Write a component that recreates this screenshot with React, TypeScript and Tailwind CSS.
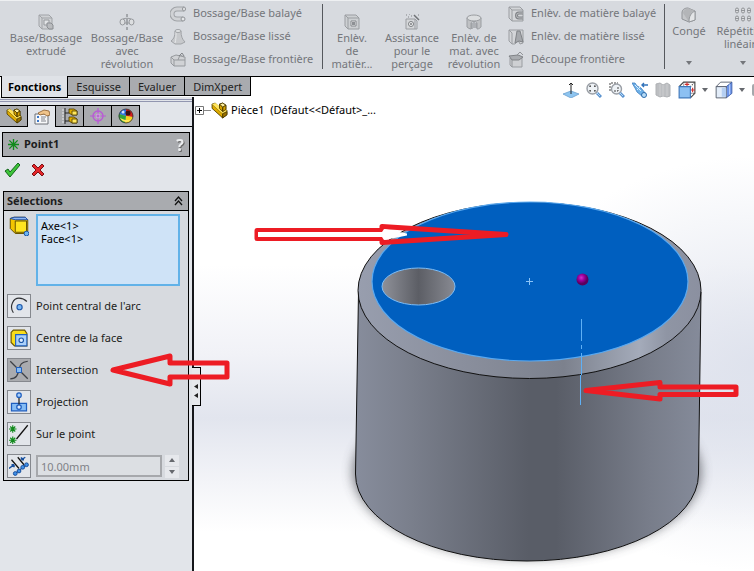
import React, { useState } from 'react';
import { clsx } from 'clsx';

type IconProps = { children: React.ReactNode; className?: string };

const Icon = ({ children, className }: IconProps) => (
  <svg viewBox="0 0 16 16" className={clsx('shrink-0', className ?? 'h-4 w-4')} fill="none" aria-hidden="true">
    {children}
  </svg>
);

// Ribbon icons (disabled, so all grey)
const ExtrudeIcon = () => (
  <Icon>
    <path d="M1 1h10l3 3v11H4L1 12z" fill="#cfd1d4" stroke="#a0a3a7" />
    <path d="M1 1l3 3h10M4 4v11" stroke="#a0a3a7" />
    <path d="M6 6h5v5H6z" fill="#e2e4e6" stroke="#96999d" />
    <path d="M9 9h4l2 2v4h-4l-2-2z" fill="#b9bbbe" stroke="#8a8d91" />
  </Icon>
);

const RevolveIcon = () => (
  <Icon>
    <path d="M8 0v3M8 5v6M8 13v3" stroke="#6f7276" />
    <path d="M4 5c3-1 5-1 8 0M5 9h6" stroke="#96999d" />
    <ellipse cx="3.5" cy="8" rx="2.5" ry="3" fill="#dcdee0" stroke="#96999d" />
    <ellipse cx="12.5" cy="8" rx="2.5" ry="3" fill="#dcdee0" stroke="#96999d" />
  </Icon>
);

const SweepIcon = () => (
  <Icon>
    <path d="M14 3H7a5 5 0 0 0 0 10h6" stroke="#a0a3a7" strokeWidth="5" />
    <path d="M14 3H7a5 5 0 0 0 0 10h6" stroke="#d0d2d5" strokeWidth="3" />
    <ellipse cx="13" cy="13" rx="2" ry="2" fill="#e4e6e8" stroke="#909397" />
    <ellipse cx="14" cy="3" rx="1.5" ry="2" fill="#e4e6e8" stroke="#909397" />
  </Icon>
);

const LoftIcon = () => (
  <Icon>
    <path d="M5 2h6c0 5 1 8 4 11l-4 2H5l-4-3c3-2 4-5 4-10z" fill="#c7c9cc" stroke="#a0a3a7" />
    <path d="M6 3c0 5 0 8-1 11" stroke="#e6e8ea" />
    <ellipse cx="8" cy="2" rx="3" ry="1.5" fill="#e1e3e5" stroke="#a0a3a7" />
  </Icon>
);

const BoundaryIcon = () => (
  <Icon>
    <path d="M1 5l5-2 9 2v9H4l-3-3z" fill="#d0d2d5" stroke="#96999d" />
    <path d="M1 5l3 3h11M4 8v6M8 8l2-5 4 2" stroke="#96999d" />
    <path d="M9 4l3-3 2 3" stroke="#808387" />
  </Icon>
);

const CutExtrudeIcon = () => (
  <Icon>
    <path d="M1 1h11l3 3v11H4l-3-3z" fill="#cccfd2" stroke="#9a9da1" />
    <path d="M1 1l3 3h11M4 4v11" stroke="#9a9da1" />
    <path d="M7 7h5v5H7z" fill="#f0f1f2" stroke="#85888c" />
    <path d="M8 8h3v3H8z" fill="#8d9094" />
  </Icon>
);

const HoleWizardIcon = () => (
  <Icon>
    <path d="M2 5h9v10H2z" fill="#d4d6d9" stroke="#9a9da1" />
    <path d="M11 5l2 2v8h-2" stroke="#9a9da1" />
    <circle cx="7" cy="10" r="2.5" fill="#eeeff0" stroke="#7b7e82" />
    <circle cx="7" cy="10" r="1" fill="#7b7e82" />
    <path d="M10 1l5 5" stroke="#6f7276" strokeWidth="1.5" />
    <path d="M2 1h1M5 0h1M7 2h1M4 3h1M14 1h1" stroke="#808387" />
  </Icon>
);

const CutRevolveIcon = () => (
  <Icon>
    <path d="M1 4v9c1 1 3 2 4 2V9c1-2 5-2 6 0v6c2 0 3-1 4-2V4z" fill="#bfc1c4" stroke="#9a9da1" />
    <ellipse cx="8" cy="4" rx="7" ry="3" fill="#dcdee0" stroke="#9a9da1" />
    <path d="M6 9v6M8 8v6M10 9v5" stroke="#85888c" />
  </Icon>
);

const CutSweepIcon = () => (
  <Icon>
    <path d="M1 1h11l3 3v11H4l-3-3z" fill="#d3d5d8" stroke="#9a9da1" />
    <path d="M1 1l3 3h11M4 4v11" stroke="#9a9da1" />
    <path d="M15 7h-4a2 2 0 0 0 0 5h4" stroke="#808387" strokeWidth="3" />
    <path d="M15 7h-4a2 2 0 0 0 0 5h4" stroke="#b9bbbe" />
  </Icon>
);

const CutLoftIcon = () => (
  <Icon>
    <path d="M1 1h14v13l-3 1-2-4-3 4H4l-3-3z" fill="#d3d5d8" stroke="#9a9da1" />
    <path d="M1 1l3 3v11" stroke="#9a9da1" />
    <path d="M9 2h3l3 11-4-1-4 2z" fill="#a5a8ac" stroke="#808387" />
  </Icon>
);

const CutBoundaryIcon = () => (
  <Icon>
    <path d="M2 6h12v9H4l-2-2z" fill="#ced0d3" stroke="#9a9da1" />
    <path d="M1 4l9-1 5 2-4 3H4z" fill="#a9acb0" stroke="#808387" />
    <path d="M4 8v7M9 3l3-3 3 3" stroke="#909397" />
  </Icon>
);

const FilletIcon = () => (
  <Icon>
    <path d="M1 6c0-3 2-5 6-5l7 3v9l-6 2-7-3z" fill="#c4c6c9" stroke="#909397" />
    <path d="M2 6c0-2 2-4 5-5l7 3C10 5 8 8 8 15z" fill="#b3b5b8" />
    <path d="M8 15c0-6 2-9 6-11v9z" fill="#e3e5e7" stroke="#96999d" />
  </Icon>
);

const PatternIcon = () => (
  <svg viewBox="0 0 18 16" className="h-4 w-[18px] shrink-0" aria-hidden="true">
    {[3, 9, 15].map((x) => (
      <g key={x} stroke="#909397" fill="#d8dadc">
        <rect x={x - 1.5} y="1" width="3" height="5" rx="1.5" />
        <rect x={x - 1.5} y="9" width="3" height="5" rx="1.5" />
        <path d={`M${x - 1.5} 3.5h3M${x - 1.5} 11.5h3`} />
      </g>
    ))}
  </svg>
);

// Panel icons
const PartIcon = ({ className }: { className?: string }) => (
  <Icon className={className ?? 'h-4 w-4'}>
    <path d="M1 2l3-1 4 4 0-3 3-1 3 2v4l1 1v4l-4 3z" fill="#f5c518" stroke="#4a3a00" strokeWidth="0.8" />
    <path d="M1 2l10 9v4L1 6z" fill="#e0ac00" stroke="#4a3a00" strokeWidth="0.8" />
    <path d="M1 2l3-1 11 8-4 2z" fill="#ffe45c" />
    <path d="M8 2l3-1 3 2-3 2z" fill="#fff0a0" stroke="#4a3a00" strokeWidth="0.8" />
    <path d="M8 2l3 3v4L8 6zM11 5l3-2v4l-3 2z" fill="#d9a400" stroke="#4a3a00" strokeWidth="0.8" />
    <path d="M11 11l4-2v3l-4 3z" fill="#9a7200" stroke="#4a3a00" strokeWidth="0.8" />
  </Icon>
);

const PropertyIcon = () => (
  <Icon>
    <path d="M1 5h13v10H1z" fill="#f7f8fa" stroke="#6d7077" />
    <path d="M3 8h2M3 12h2" stroke="#3c78c8" strokeWidth="2" />
    <path d="M7 8h5M7 10h4M7 12h5" stroke="#80838a" />
    <path d="M4 4l6-3 5 1 1 4-3 1-3-2-4 1z" fill="#f0c48a" stroke="#8a5a2a" strokeWidth="0.8" />
  </Icon>
);

const ConfigIcon = () => (
  <Icon>
    <path d="M3 0v16M3 5h4M3 13h4" stroke="#222" />
    <path d="M1 1v14" stroke="#e8e9eb" strokeDasharray="2 1" />
    {[1, 9].map((y) => (
      <g key={y} stroke="#4a3a00" strokeWidth="0.8">
        <path d={`M7 ${y}h5l3 2v4h-5l-3-2z`} fill="#e0ac00" />
        <path d={`M10 ${y + 2}h5v4h-5z`} fill="#ffe65a" />
      </g>
    ))}
  </Icon>
);

const TargetIcon = () => (
  <Icon>
    <circle cx="8" cy="8" r="5" stroke="#b95bd6" strokeWidth="1.4" />
    <path d="M8 0v16M0 8h16" stroke="#b95bd6" strokeWidth="1.2" />
    <circle cx="8" cy="8" r="2" stroke="#d79be8" />
  </Icon>
);

const AppearanceIcon = () => (
  <Icon>
    <path d="M8 8L1 6a7 7 0 0 1 8-5z" fill="#2f74e0" />
    <path d="M8 8V1a7 7 0 0 1 7 8z" fill="#d81e1e" />
    <path d="M8 8l7 1a7 7 0 0 1-8 6z" fill="#f6d21c" />
    <path d="M8 8l-1 7a7 7 0 0 1-6-9z" fill="#33a53a" />
    <path d="M2 10a7 7 0 0 0 12 1c-4 2-8 1-12-1z" fill="#ffe75a" />
    <circle cx="10" cy="5" r="2.5" fill="#3a1212" />
    <circle cx="5" cy="4" r="1.5" fill="#cfe2ff" />
    <circle cx="8" cy="8" r="7" stroke="#333" strokeWidth="0.8" />
  </Icon>
);

const PointIcon = () => (
  <Icon className="h-[11px] w-[11px]">
    <path d="M8 0v16M0 8h16M2 2l12 12M14 2L2 14" stroke="#118a1c" strokeWidth="2" />
  </Icon>
);

const SelectionIcon = () => (
  <Icon className="h-[20px] w-[20px]">
    <path d="M1 2l3-1h9l2 2v9l-2 2H5l-4-4z" fill="#f3c500" stroke="#6b5600" strokeWidth="0.8" />
    <path d="M1 2l3-1h9l2 2H5z" fill="#8db8f5" stroke="#2351a8" strokeWidth="0.8" />
    <path d="M5 4h9v9H5z" fill="#ffe51f" stroke="#6b5600" strokeWidth="0.8" />
    <circle cx="14" cy="14" r="1.9" fill="#6db4f2" stroke="#1c56a8" strokeWidth="0.8" />
  </Icon>
);

const ArcIcon = () => (
  <Icon className="h-[18px] w-[18px]">
    <path d="M3 14C-1 8 3 1 8 1c3 0 5 1 7 3" stroke="#2d2f33" />
    <circle cx="8.500" cy="9" r="2.300" fill="#7ab8f5" stroke="#1c56a8" />
  </Icon>
);

const FaceCenterIcon = () => (
  <Icon className="h-[18px] w-[18px]">
    <path d="M1 3l2-2h10l2 3v11H4l-3-3z" fill="#f9dc1c" stroke="#6b5600" />
    <path d="M5 5h10v10H5z" fill="#a9d0fb" stroke="#1f5fc0" />
    <circle cx="10" cy="10" r="2" fill="#dcecff" stroke="#1c56a8" />
  </Icon>
);

const IntersectionIcon = () => (
  <Icon className="h-[20px] w-[20px]">
    <path d="M1 1l14 14M1 15c5 0 6-3 7-7s1-6 7-7" stroke="#3d4046" />
    <path d="M6 6h4v4H6z" fill="#86bdf5" stroke="#1f5fc0" strokeWidth="0.8" />
  </Icon>
);

const ProjectionIcon = () => (
  <Icon className="h-[20px] w-[20px]">
    <path d="M2 9h12v6H2z" fill="#86bdf5" stroke="#1f5fc0" />
    <path d="M8 4v7" stroke="#222" />
    <circle cx="8" cy="2.500" r="1.800" fill="#a9d0fb" stroke="#1f5fc0" />
    <circle cx="8" cy="12" r="1.800" fill="#dcecff" stroke="#1f5fc0" />
  </Icon>
);

const OnPointIcon = () => (
  <Icon className="h-[20px] w-[20px]">
    <path d="M6 12l9-11" stroke="#111" />
    <path d="M3 1v6M0 4h6M1 2l4 4M5 2L1 6M3 10v6M0 13h6M1 11l4 4M5 11l-4 4" stroke="#118a1c" strokeWidth="0.9" />
  </Icon>
);

const DistanceIcon = () => (
  <Icon className="h-[20px] w-[20px]">
    <path d="M5 14L15 6" stroke="#174f9e" strokeWidth="1.2" />
    <path d="M2 3l6 7M7 1l5 6" stroke="#111" />
    <path d="M0 10l4-3M4 7v2M4 7H2M13 1l-3 2M10 3V1M10 3h2" stroke="#174f9e" strokeWidth="1.2" />
    {[[5, 14], [8, 12], [11, 9], [14, 7]].map(([x, y]) => (
      <circle key={x} cx={x} cy={y} r="1.5" fill="#3f90e8" stroke="#174f9e" strokeWidth="0.8" />
    ))}
  </Icon>
);

// View toolbar icons
const NormalToIcon = () => (
  <Icon>
    <path d="M0 12l8-3 8 3-8 4z" fill="#8ec5f0" stroke="#6aa0cf" strokeWidth="0.8" />
    <path d="M8 12V1M6 3l2-2 2 2" stroke="#222" />
  </Icon>
);

const ZoomFitIcon = () => (
  <Icon>
    <circle cx="6.5" cy="6.5" r="5.500" fill="#eef2f6" stroke="#9a9fa6" strokeWidth="1.4" />
    <path d="M4 5V4h1M8 4h1v1M9 8v1H8M5 9H4V8" stroke="#333" strokeWidth="1.2" />
    <path d="M11 11l4 4" stroke="#5b93cf" strokeWidth="3" />
    <path d="M11 11l3 3" stroke="#b5daf8" />
  </Icon>
);

const ZoomAreaIcon = () => (
  <Icon>
    <path d="M1 9V1h8" stroke="#444" strokeDasharray="2 1" />
    <circle cx="7.500" cy="7" r="5" fill="#eef2f6" stroke="#9a9fa6" strokeWidth="1.4" />
    <path d="M5 9h4V4" stroke="#444" strokeDasharray="2 1" />
    <path d="M11 11l4 4" stroke="#5b93cf" strokeWidth="3" />
    <path d="M11 11l3 3" stroke="#b5daf8" />
  </Icon>
);

const PreviousViewIcon = () => (
  <Icon>
    <path d="M0 1l3 0 2 3 4 2 5 6-3 3-6-5-2-4z" fill="#6fb1e8" stroke="#3f7fc0" strokeWidth="0.8" />
    <ellipse cx="12" cy="13" rx="2.500" ry="2.500" fill="#b7dcf8" stroke="#2d6cab" />
    <path d="M3 3l6 6M5 8l3-3" stroke="#d9eefc" />
    <path d="M10 3h6M12 1l-2 2 2 2" stroke="#3273ba" strokeWidth="1.4" />
  </Icon>
);

const SectionViewIcon = () => (
  <Icon>
    <path d="M1 2l4-1 3 2 4-2 3 2v11l-3 1-4-1-3 1-4-2z" fill="#bcbec1" stroke="#b0b2b5" />
    <path d="M5 2v12M8 3v11M12 2v12" stroke="#cdced0" />
  </Icon>
);

const OrientationIcon = () => (
  <Icon className="h-[18px] w-[18px]">
    <path d="M1 5l4-4h10v10l-4 4" fill="#fff" stroke="#444" />
    <path d="M5 1v4M11 5l4-4M11 11h4" stroke="#555" strokeDasharray="1 1" />
    <path d="M8 1v4M6 3h4M13 6v4M11 8h4" stroke="#d03030" />
    <path d="M1 5h10v10H1z" fill="#8cc0f2" stroke="#3f78bb" />
  </Icon>
);

const DisplayStyleIcon = () => (
  <Icon className="h-[18px] w-[18px]">
    <path d="M1 5l4-4h10l-4 4z" fill="#fff" stroke="#555c6b" strokeWidth="0.8" />
    <path d="M10 5l5-4v10l-5 4z" fill="#6b93e8" stroke="#4060a8" strokeWidth="0.8" />
    <path d="M13 3v9" stroke="#b9cffa" />
    <path d="M1 5h9v10H1z" fill="#e3edf9" stroke="#555c6b" strokeWidth="0.8" />
    <path d="M6 6h4v8H6z" fill="#b5cff2" />
  </Icon>
);

const Caret = ({ className }: { className?: string }) => (
  <svg viewBox="0 0 6 4" className={clsx('h-1 w-1.5 shrink-0', className)} aria-hidden="true">
    <path d="M0 0h6L3 4z" fill="currentColor" />
  </svg>
);

type ToolProps = { icon: React.ReactNode; lines: string[]; className: string; menu?: boolean };

const LargeTool = ({ icon, lines, className, menu }: ToolProps) => (
  <button
    type="button"
    className={clsx('flex h-full shrink-0 flex-col items-center text-center leading-[13px]', className, menu ? 'pt-[7px]' : 'pt-[14px]')}
  >
    {icon}
    <span className="pt-px">
      {lines.map((line) => (
        <span key={line} className="block whitespace-nowrap">{line}</span>
      ))}
    </span>
    {menu && <Caret className="mt-auto mb-[11px]" />}
  </button>
);

const SmallTool = ({ icon, label }: { icon: React.ReactNode; label: string }) => (
  <button type="button" className="flex h-[23px] items-center gap-[7px] whitespace-nowrap">
    {icon}
    {label}
  </button>
);

const Separator = () => <div className="mt-1 h-[65px] w-px shrink-0 bg-[#55585d]" />;

const Ribbon = () => (
  <header className="flex h-[77px] shrink-0 overflow-hidden border-b border-black bg-[#d7dadf] text-[11px] text-[#74767b] shadow-[inset_0_1px_0_#eef0f2]">
    <LargeTool icon={<ExtrudeIcon />} lines={['Base/Bossage', 'extrudé']} className="ml-1 w-[84px]" />
    <LargeTool icon={<RevolveIcon />} lines={['Bossage/Base', 'avec', 'révolution']} className="w-[78px]" />
    <div className="flex w-[156px] shrink-0 flex-col pt-0.5 pl-1">
      <SmallTool icon={<SweepIcon />} label="Bossage/Base balayé" />
      <SmallTool icon={<LoftIcon />} label="Bossage/Base lissé" />
      <SmallTool icon={<BoundaryIcon />} label="Bossage/Base frontière" />
    </div>
    <Separator />
    <LargeTool icon={<CutExtrudeIcon />} lines={['Enlèv.', 'de', 'matièr...']} className="w-[58px]" />
    <LargeTool icon={<HoleWizardIcon />} lines={['Assistance', 'pour le', 'perçage']} className="w-[62px]" />
    <LargeTool icon={<CutRevolveIcon />} lines={['Enlèv. de', 'mat. avec', 'révolution']} className="w-[62px]" />
    <div className="flex w-[159px] shrink-0 flex-col pt-0.5 pl-[3px]">
      <SmallTool icon={<CutSweepIcon />} label="Enlèv. de matière balayé" />
      <SmallTool icon={<CutLoftIcon />} label="Enlèv. de matière lissé" />
      <SmallTool icon={<CutBoundaryIcon />} label="Découpe frontière" />
    </div>
    <Separator />
    <LargeTool icon={<FilletIcon />} lines={['Congé']} className="w-[48px]" menu />
    <LargeTool icon={<PatternIcon />} lines={['Répétition', 'linéaire']} className="w-[60px]" menu />
  </header>
);

const TABS = ['Fonctions', 'Esquisse', 'Evaluer', 'DimXpert'];

const CommandTabs = () => {
  const [current, setCurrent] = useState('Fonctions');

  return (
    <nav className="relative z-10 -mt-px flex h-[21px] w-max pl-px text-[11px] text-[#222]">
      {TABS.map((tab) => (
        <button
          key={tab}
          type="button"
          onClick={() => setCurrent(tab)}
          className={clsx(
            'border-r border-b border-black leading-[17px]',
            tab === current ? 'h-[22px] border-l bg-[#dfe2e7] px-1.5 font-bold text-black' : 'h-5 border-t bg-[#a9abaf] px-2',
          )}
        >
          {tab}
        </button>
      ))}
    </nav>
  );
};

const MANAGERS = [
  { name: 'Arbre de création', icon: <PartIcon /> },
  { name: 'Propriétés', icon: <PropertyIcon /> },
  { name: 'Configurations', icon: <ConfigIcon /> },
  { name: 'DimXpert', icon: <TargetIcon /> },
  { name: 'Apparences', icon: <AppearanceIcon /> },
];

const OPTIONS = [
  { label: "Point central de l'arc", icon: <ArcIcon /> },
  { label: 'Centre de la face', icon: <FaceCenterIcon /> },
  { label: 'Intersection', icon: <IntersectionIcon /> },
  { label: 'Projection', icon: <ProjectionIcon /> },
  { label: 'Sur le point', icon: <OnPointIcon /> },
];

const PropertyPanel = () => {
  const [mode, setMode] = useState('Intersection');

  return (
    <aside className="relative flex flex-1 flex-col border-r-2 border-[#15161a] bg-[#e2e5ea] text-[11px] text-[#1c1d20]">
      <div className="mt-0.5 h-[3px] border-y border-[#9296b0]" />
      <div className="mt-[3px] flex h-[22px] shrink-0 border-b border-black">
        {MANAGERS.map((manager, i) => (
          <button
            key={manager.name}
            type="button"
            aria-label={manager.name}
            className={clsx(
              'flex w-7 items-center justify-center border-t border-r border-black',
              i === 1 ? 'h-[22px] bg-[#e2e5ea]' : 'h-[21px] bg-[#a9abaf]',
            )}
          >
            {manager.icon}
          </button>
        ))}
      </div>

      <h1 className="mx-0.5 mt-[5px] flex h-[25px] shrink-0 items-center gap-[5px] border border-black bg-[#a9abaf] px-[5px] font-bold">
        <PointIcon />
        Point1
        <button type="button" aria-label="Aide" className="ml-auto text-[16px] text-[#eceef0] drop-shadow-[1px_1px_0_#666]">?</button>
      </h1>

      <div className="flex gap-2.5 px-1 py-[5px]">
        <button type="button" aria-label="OK">
          <Icon>
            <path d="M1 9l3-2 2 3 8-9 2 2-10 12z" fill="#3ec43a" stroke="#12651a" />
          </Icon>
        </button>
        <button type="button" aria-label="Annuler">
          <Icon>
            <path d="M2 4l2-2 4 4 4-4 2 2-4 4 4 4-2 2-4-4-4 4-2-2 4-4z" fill="#e3262a" stroke="#7d1013" />
          </Icon>
        </button>
      </div>

      <fieldset className="mx-[3px] mt-2 border border-black bg-[#d7dadf]">
        <div className="flex h-[19px] items-center justify-between border-b border-black bg-[#a9abaf] px-[3px] font-bold">
          Sélections
          <button type="button" aria-label="Réduire">
            <svg viewBox="0 0 9 10" className="mr-0.5 h-2.5 w-[9px]" fill="none" stroke="#111" strokeWidth="1.3">
              <path d="M1 5l3.500-4L8 5M1 9l3.500-4L8 9" />
            </svg>
          </button>
        </div>

        <div className="flex gap-[7px] pt-[3px] pr-2 pl-[3px]">
          <div className="flex w-[22px] justify-end pt-0.5">
            <SelectionIcon />
          </div>
          <ul className="h-[72px] flex-1 border-2 border-[#62b2e8] bg-[#cfe3f7] pt-[3px] pl-[3px] leading-[13px] text-black">
            <li>Axe&lt;1&gt;</li>
            <li>Face&lt;1&gt;</li>
          </ul>
        </div>

        <div className="flex flex-col gap-2 pt-2 pr-[9px] pb-0.5 pl-[3px]">
          {OPTIONS.map((option) => (
            <button
              key={option.label}
              type="button"
              aria-pressed={mode === option.label}
              onClick={() => setMode(option.label)}
              className="flex h-6 items-center gap-[5px] text-left"
            >
              <span
                className={clsx(
                  'flex h-6 w-6 items-center justify-center border border-[#85888e]',
                  mode === option.label ? 'bg-[#a9abaf]' : 'bg-[#e2e5ea]',
                )}
              >
                {option.icon}
              </span>
              {option.label}
            </button>
          ))}
          <div className="flex h-6 items-center gap-[5px]">
            <button type="button" aria-label="Distance" className="flex h-6 w-6 items-center justify-center border border-[#85888e] bg-[#e2e5ea]">
              <DistanceIcon />
            </button>
            <input
              aria-label="Distance"
              defaultValue="10.00mm"
              className="h-[22px] w-0 flex-1 border-2 border-[#a6a8ac] bg-[#dcdfe3] pl-[3px] text-[#808287] outline-none"
            />
            <div className="-ml-0.5 flex w-[14px] flex-col gap-px text-[#66696e]">
              <button type="button" aria-label="Augmenter" className="flex h-[11px] items-center justify-center bg-[#e6e8ec]">
                <Caret className="rotate-180" />
              </button>
              <button type="button" aria-label="Diminuer" className="flex h-[11px] items-center justify-center bg-[#e6e8ec]">
                <Caret />
              </button>
            </div>
          </div>
        </div>
      </fieldset>

      <button
        type="button"
        aria-label="Masquer le panneau"
        className="absolute top-[270px] -right-[9px] z-10 flex h-[39px] w-[9px] items-center justify-center border border-l-0 border-black bg-[#e6e8ec] pt-2"
      >
        <svg viewBox="0 0 4 14" className="h-[14px] w-1">
          <path d="M4 0v5L0 2.500zM4 9v5l-4-2.500z" fill="#222" />
        </svg>
      </button>
    </aside>
  );
};

const Scene = () => (
  <svg viewBox="194 77 560 494" className="absolute inset-0 h-full w-full" fill="none" role="img" aria-label="Pièce1">
    <defs>
      <linearGradient id="side">
        <stop offset="0" stopColor="#878d9c" />
        <stop offset="0.15" stopColor="#7b808d" />
        <stop offset="0.5" stopColor="#595d67" />
        <stop offset="0.58" stopColor="#595d67" />
        <stop offset="0.85" stopColor="#787d8a" />
        <stop offset="1" stopColor="#858b9a" />
      </linearGradient>
      <linearGradient id="chamfer">
        <stop offset="0" stopColor="#989eae" />
        <stop offset="0.3" stopColor="#8a8f9d" />
        <stop offset="0.6" stopColor="#7c818d" />
        <stop offset="0.82" stopColor="#a4abba" />
        <stop offset="0.9" stopColor="#8f95a4" />
        <stop offset="1" stopColor="#8b90a0" />
      </linearGradient>
      <linearGradient id="hole">
        <stop offset="0" stopColor="#8f9199" />
        <stop offset="0.5" stopColor="#5c5e65" />
        <stop offset="1" stopColor="#888a92" />
      </linearGradient>
      <radialGradient id="ball" cx="0.4" cy="0.35">
        <stop offset="0" stopColor="#cc30cc" />
        <stop offset="0.5" stopColor="#9c009c" />
        <stop offset="1" stopColor="#5c005c" />
      </radialGradient>
      <filter id="soft" x="-20%" y="-20%" width="140%" height="140%">
        <feGaussianBlur stdDeviation="6" />
      </filter>
    </defs>

    <ellipse cx="527" cy="472" rx="174" ry="86" fill="#4c4e54" opacity="0.75" filter="url(#soft)" />
    <path d="M358.500 292L355.500 474A171.500 87 0 0 0 698.500 474L701 292z" fill="url(#side)" stroke="#111" />
    <ellipse cx="529.500" cy="290.500" rx="171.500" ry="88" fill="url(#chamfer)" stroke="#111" />
    <ellipse cx="530" cy="281.500" rx="158" ry="79.500" fill="#005fbf" stroke="#5aa9f0" strokeWidth="1.200" />
    <ellipse cx="418.500" cy="286.500" rx="36.500" ry="18.500" fill="url(#hole)" stroke="#7fbdf5" />
    <path d="M526 281.500h7M529.500 278v7" stroke="#8ac4f8" />
    <circle cx="582.500" cy="279.500" r="6" fill="url(#ball)" />
    <path d="M581.500 319v22M581.500 345v4M581.500 353v22M580.500 375v30" stroke="#5fb0f5" />

    <g stroke="#ed1c24" strokeWidth="5" strokeLinejoin="round">
      <path d="M257 230.500h125v-4l124 8-124 8v-4H257z" />
      <path d="M384 229l23 4.500v2L384 240l-2-3H258v-5h124z" fill="#fff" stroke="none" />
      <path d="M586 390.500l74-8v4.500h76v7.500h-76v4.500z" />
    </g>
  </svg>
);

const VIEW_TOOLS = [
  { name: 'Normal à', icon: <NormalToIcon /> },
  { name: 'Zoom au mieux', icon: <ZoomFitIcon /> },
  { name: 'Zoom fenêtre', icon: <ZoomAreaIcon /> },
  { name: 'Vue précédente', icon: <PreviousViewIcon /> },
  { name: 'Vue en coupe', icon: <SectionViewIcon /> },
  { name: 'Orientation de vue', icon: <OrientationIcon />, menu: true },
  { name: "Style d'affichage", icon: <DisplayStyleIcon />, menu: true },
];

const Viewport = () => (
  <section className="relative flex-1 bg-[radial-gradient(ellipse_45%_42%_at_100%_58%,rgba(221,225,236,0.9),rgba(221,225,236,0)),linear-gradient(to_bottom,#ffffff_38%,#f1f2f7_56%,#e2e5ee_69%,#f3f4f8_82%,#ffffff_92%)]">
    <Scene />
    <div className="relative flex h-[26px] items-center justify-end gap-[7px] text-[#66696e]">
      {VIEW_TOOLS.map((tool) => (
        <button key={tool.name} type="button" aria-label={tool.name} className="flex items-center gap-1.5">
          {tool.icon}
          {tool.menu && <Caret />}
        </button>
      ))}
      <button type="button" aria-label="Masquer/Afficher" className="h-3 w-0.5 rounded-l-full bg-[#a5a8ac]" />
    </div>
    <div className="relative -mt-px flex items-center pl-px text-[11px] text-black">
      <button type="button" aria-label="Développer">
        <svg viewBox="0 0 16 9" className="h-[9px] w-4" fill="none">
          <path d="M0.500 0.500h8v8h-8z" stroke="#777" />
          <path d="M2 4.500h5M4.500 2v5" stroke="#000" />
          <path d="M9 4.500h7" stroke="#888" />
        </svg>
      </button>
      <PartIcon className="h-[17px] w-[17px]" />
      <span className="pl-[3px] whitespace-pre">Pièce1  (Défaut&lt;&lt;Défaut&gt;_...</span>
    </div>
  </section>
);

const App = () => (
  <div className="flex h-screen flex-col overflow-hidden bg-white font-['Noto_Sans',sans-serif]">
    <Ribbon />
    <main className="relative flex flex-1">
      <div className="flex w-[194px] shrink-0 flex-col">
        <CommandTabs />
        <PropertyPanel />
      </div>
      <Viewport />
      {/* arrow pointing at the active option */}
      <svg viewBox="0 0 122 36" className="pointer-events-none absolute top-[275px] left-[108px] z-20 h-9 w-[122px]" fill="none">
        <path d="M5 18l57-14v7h57v14H62v7z" stroke="#ed1c24" strokeWidth="5" strokeLinejoin="round" />
      </svg>
    </main>
  </div>
);

export default App;
